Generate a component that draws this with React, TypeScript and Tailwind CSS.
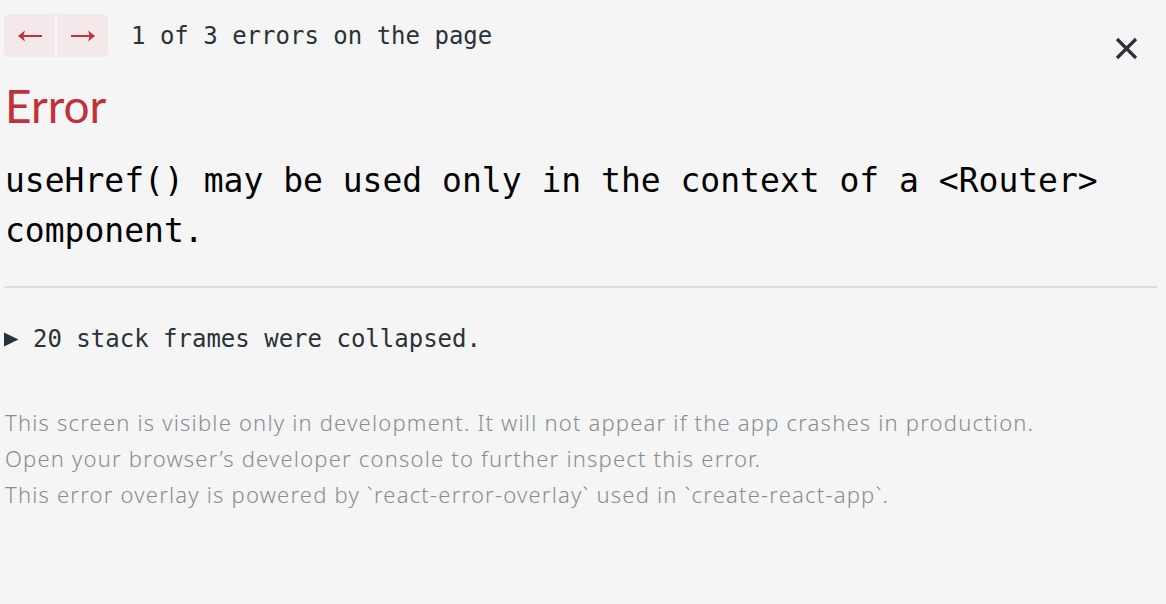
import React from "react";

const mono = "font-['DejaVu_Sans_Mono','Liberation_Mono',monospace]";
const sans = "font-['Lato','Noto_Sans',sans-serif]";
const body = "font-['Noto_Sans','Open_Sans',sans-serif]";

const ArrowIcon: React.FC<{ dir: "left" | "right" }> = ({ dir }) => (
  <svg
    width="26"
    height="14"
    viewBox="0 0 26 14"
    className={dir === "right" ? "rotate-180" : ""}
  >
    <path d="M2 7 H25" stroke="#c0313a" strokeWidth="2" fill="none" />
    <path d="M1 7 L8 1.5 L6.2 7 L8 12.5 Z" fill="#c0313a" />
  </svg>
);

const ErrorNav: React.FC = () => (
  <div className="flex items-center">
    <div className="flex h-[43px] gap-[2px]">
      <button className="flex w-[51px] items-center justify-center rounded-l-[6px] bg-[#f3e9ea]">
        <ArrowIcon dir="left" />
      </button>
      <button className="flex w-[51px] items-center justify-center rounded-r-[6px] bg-[#f3e9ea]">
        <ArrowIcon dir="right" />
      </button>
    </div>
    <span className={`${mono} ml-[23px] text-[24px] text-[#293238]`}>
      1 of 3 errors on the page
    </span>
  </div>
);

export default function App() {
  return (
    <div className="min-h-[604px] w-full bg-[#f5f5f5] pl-[4px] pr-[9px]">
      <div className="flex items-start justify-between pt-[14px]">
        <ErrorNav />
        <button className="mr-[19px] mt-[23px]">
          <svg width="23" height="23" viewBox="0 0 23 23">
            <path
              d="M2 2 L21 21 M21 2 L2 21"
              stroke="#293238"
              strokeWidth="3.2"
              fill="none"
            />
          </svg>
        </button>
      </div>

      <h1
        className={`${sans} mt-[18px] pl-[1px] text-[46px] leading-[1.2] font-normal text-[#c0313a]`}
      >
        Error
      </h1>

      <p
        className={`${mono} mt-[23px] pl-[1px] text-[33px] leading-[50px] text-black`}
      >
        useHref() may be used only in the context of a &lt;Router&gt; component.
      </p>

      <div className="mt-[30px] h-[2px] bg-[#dddddd]" />

      <div
        className={`${mono} mt-[33px] flex items-center text-[24px] leading-[36px] text-[#293238]`}
      >
        <svg width="15" height="15" viewBox="0 0 15 15" className="mr-[14px]">
          <path d="M0 0.5 L14.5 7.5 L0 14.5 Z" fill="#293238" />
        </svg>
        <span>20 stack frames were collapsed.</span>
      </div>

      <div
        className={`${body} mt-[47px] pl-[1px] text-[22px] leading-[36px] font-light tracking-[1.2px] text-[#878e91]`}
      >
        <div>
          This screen is visible only in development. It will not appear if the
          app crashes in production.
        </div>
        <div>
          Open your browser’s developer console to further inspect this error.
        </div>
        <div>
          This error overlay is powered by `react-error-overlay` used in
          `create-react-app`.
        </div>
      </div>
    </div>
  );
}
